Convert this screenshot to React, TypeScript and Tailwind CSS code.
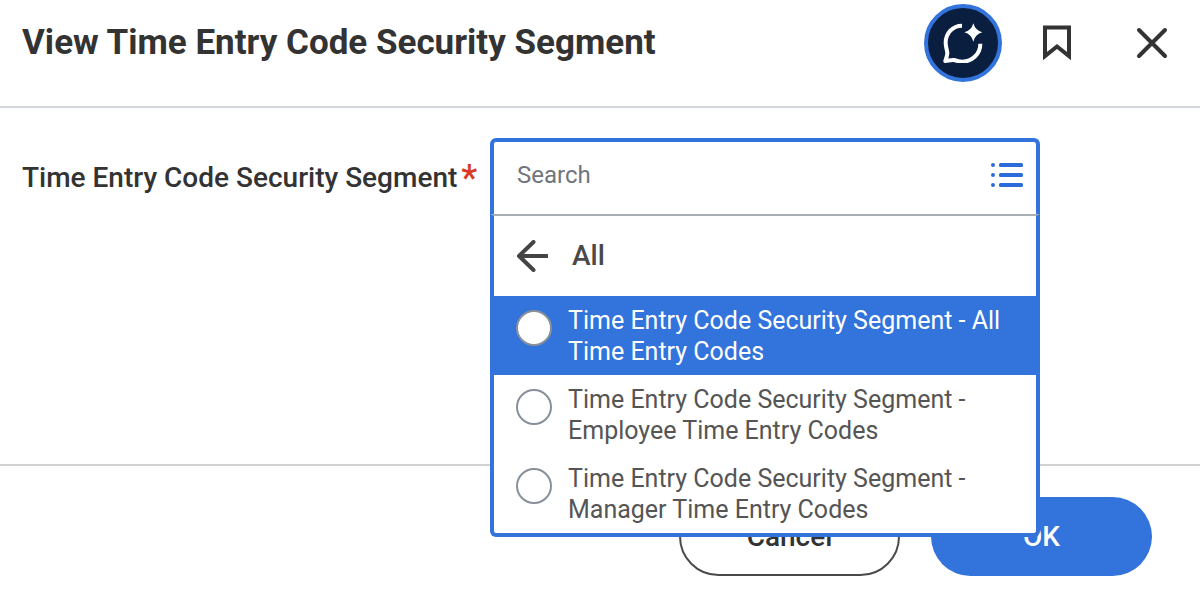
import { useState } from 'react';

const OPTIONS = [
  'Time Entry Code Security Segment - All Time Entry Codes',
  'Time Entry Code Security Segment - Employee Time Entry Codes',
  'Time Entry Code Security Segment - Manager Time Entry Codes',
];

function AssistantIcon() {
  return (
    <svg viewBox="0 0 120 120" className="size-10" fill="none" aria-hidden="true">
      <path
        d="M57 8C29 8 8 31 8 59c0 12 4 21 5 31 0 8-3 15-6 24 10-1 17-4 26-3 9 3 16 5 25 5 29 0 54-23 54-54"
        stroke="#fff"
        strokeWidth="12"
        strokeLinejoin="round"
      />
      <path d="M91 1q6 22 27 27-21 5-27 28-6-23-27-28 21-5 27-27z" fill="#fff" />
    </svg>
  );
}

function BookmarkIcon() {
  return (
    <svg viewBox="0 0 28 36" className="h-9 w-7" fill="none" aria-hidden="true">
      <path d="M2 2.500h24v28.500L14 21.500 2 31z" stroke="#333" strokeWidth="4" />
    </svg>
  );
}

function CloseIcon() {
  return (
    <svg viewBox="0 0 32 32" className="size-8" fill="none" aria-hidden="true">
      <path d="M3 3l26 26M29 3L3 29" stroke="#333" strokeWidth="4" strokeLinecap="round" />
    </svg>
  );
}

function ListIcon() {
  return (
    <svg viewBox="0 0 32 24" className="h-6 w-8" aria-hidden="true">
      <g fill="#2b6cdb">
        {[0, 10, 20].map((y) => (
          <g key={y}>
            <circle cx="2" cy={y + 2} r="2" />
            <rect x="8" y={y} width="24" height="4" rx="1.5" />
          </g>
        ))}
      </g>
    </svg>
  );
}

function BackIcon() {
  return (
    <svg viewBox="0 0 32 32" className="size-8" fill="none" aria-hidden="true">
      <path
        d="M17.500 2L3 16l14.500 14M3 16h28"
        stroke="#444"
        strokeWidth="4"
        strokeLinecap="round"
        strokeLinejoin="round"
      />
    </svg>
  );
}

export default function App() {
  const [active, setActive] = useState(0);
  const [query, setQuery] = useState('');

  return (
    <div className="flex min-h-screen flex-col bg-white font-['Roboto',sans-serif] text-[#333]">
      <header className="flex items-center justify-between border-b-2 border-[#d3d7dc] pt-1 pr-8 pb-6 pl-[22px]">
        <h1 className="text-[35px] leading-10 font-bold">View Time Entry Code Security Segment</h1>
        <div className="flex items-center">
          <button
            type="button"
            aria-label="Assistant"
            className="flex size-[78px] items-center justify-center rounded-full border-4 border-[#3273dc] bg-[#0a1e40]"
          >
            <AssistantIcon />
          </button>
          <button type="button" aria-label="Bookmark" className="ml-[41px]">
            <BookmarkIcon />
          </button>
          <button type="button" aria-label="Close" className="ml-[65px]">
            <CloseIcon />
          </button>
        </div>
      </header>

      <main className="flex h-[356px] items-start pt-[30px] pr-12 pl-[22px]">
        <label
          htmlFor="segment"
          className="flex w-[468px] shrink-0 items-center gap-1 pt-5 text-[28px] leading-10 font-medium"
        >
          Time Entry Code Security Segment
          <span className="text-4xl leading-10 text-[#d93a24]">*</span>
        </label>

        <div className="relative z-10 max-w-[550px] flex-1">
          <div className="flex h-[76px] items-center rounded-t-md border-4 border-b-0 border-[#3273dc] bg-white pr-[13px] pb-1.5 pl-[23px]">
            <input
              id="segment"
              type="text"
              value={query}
              onChange={(event) => setQuery(event.target.value)}
              placeholder="Search"
              className="min-w-0 flex-1 bg-transparent text-2xl outline-none placeholder:text-[#70757d]"
            />
            <button type="button" aria-label="Show list">
              <ListIcon />
            </button>
          </div>

          <div className="absolute top-full right-0 left-0 rounded-b-md border-x-4 border-b-4 border-t-2 border-[#3273dc] border-t-[#a9aeb4] bg-white">
            <button
              type="button"
              className="flex h-20 w-full items-center gap-6 pl-[22px] text-[28px] font-medium text-[#494949]"
            >
              <BackIcon />
              All
            </button>
            <div role="radiogroup" aria-label="Time Entry Code Security Segment">
              {OPTIONS.map((option, index) => (
                <label
                  key={option}
                  onMouseEnter={() => setActive(index)}
                  className={
                    index === active
                      ? 'flex items-start gap-4 bg-[#3273dc] pt-[9px] pr-6 pb-2 pl-[22px] text-white'
                      : 'flex items-start gap-4 pt-[9px] pr-6 pb-2 pl-[22px] text-[#555]'
                  }
                >
                  <input
                    type="radio"
                    name="segment-option"
                    className="mt-[5px] size-9 shrink-0 appearance-none rounded-full border-2 border-[#87909a] bg-white checked:border-8"
                  />
                  <span className="text-[25px] leading-[31px]">{option}</span>
                </label>
              ))}
            </div>
          </div>
        </div>
      </main>

      <footer className="flex flex-1 items-start justify-end gap-[31px] border-t-2 border-[#d2d2d2] pt-[31px] pr-12 pb-3">
        <button
          type="button"
          className="h-[79px] w-[221px] rounded-full border-2 border-[#4a4a4a] bg-white text-[28px] font-medium"
        >
          Cancel
        </button>
        <button type="button" className="h-[79px] w-[221px] rounded-full bg-[#3273dc] text-[28px] font-medium text-white">
          OK
        </button>
      </footer>
    </div>
  );
}
